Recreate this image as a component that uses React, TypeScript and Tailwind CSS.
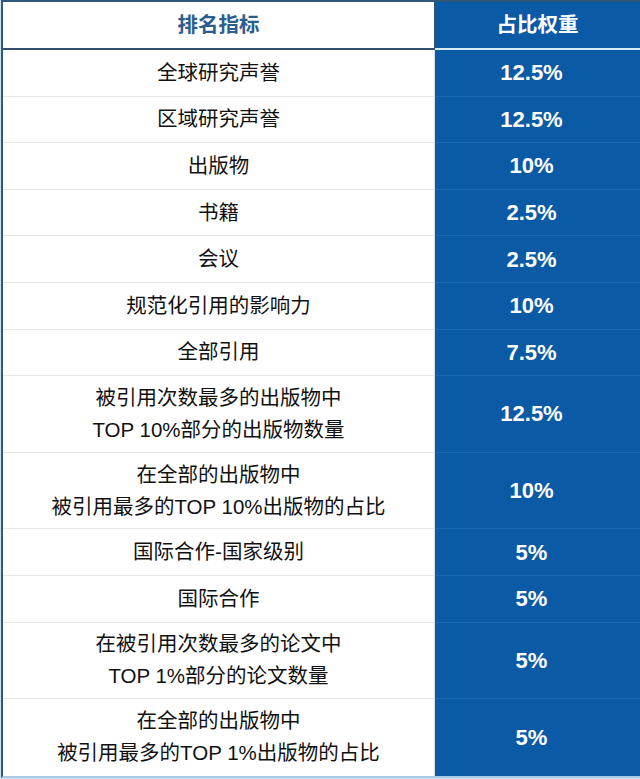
import React from "react";

type Row = { name: string[]; weight: string };

const rows: Row[] = [
  { name: ["全球研究声誉"], weight: "12.5%" },
  { name: ["区域研究声誉"], weight: "12.5%" },
  { name: ["出版物"], weight: "10%" },
  { name: ["书籍"], weight: "2.5%" },
  { name: ["会议"], weight: "2.5%" },
  { name: ["规范化引用的影响力"], weight: "10%" },
  { name: ["全部引用"], weight: "7.5%" },
  { name: ["被引用次数最多的出版物中", "TOP 10%部分的出版物数量"], weight: "12.5%" },
  { name: ["在全部的出版物中", "被引用最多的TOP 10%出版物的占比"], weight: "10%" },
  { name: ["国际合作-国家级别"], weight: "5%" },
  { name: ["国际合作"], weight: "5%" },
  { name: ["在被引用次数最多的论文中", "TOP 1%部分的论文数量"], weight: "5%" },
  { name: ["在全部的出版物中", "被引用最多的TOP 1%出版物的占比"], weight: "5%" },
];

function App() {
  return (
    <div className="w-[640px] h-[779px] bg-[#cfe3f3] pl-[1px] font-['Liberation_Sans','Noto_Sans_CJK_SC',sans-serif]">
      <div className="border-l-2 border-t-2 border-b-2 border-l-[#2f5878] border-t-[#2f5878] border-b-[#a9cbe6]">
        {/* header */}
        <div className="grid grid-cols-[432px_1fr] h-[48px]">
          <div className="flex items-center justify-center bg-white border-b-2 border-[#34506a] border-r border-r-[#34506a] text-[20.5px] font-bold text-[#2b5d8d]">
            排名指标
          </div>
          <div className="flex items-center justify-center bg-[#0b5aa6] border-b-2 border-[#d9ebf8] text-[20.5px] font-bold text-white">
            占比权重
          </div>
        </div>

        {rows.map((row, i) => (
          <div
            key={i}
            className={
              "grid grid-cols-[432px_1fr] " +
              (row.name.length > 1 ? "h-[76.6px]" : "h-[46.6px]")
            }
          >
            <div
              className={
                "flex flex-col items-center justify-center bg-white border-r border-r-[#d7dde3] text-[20.5px] leading-[32px] text-[#111111] " +
                (i < rows.length - 1 ? "border-b border-b-[#e6e6e6]" : "")
              }
            >
              {row.name.map((line, j) => (
                <span key={j}>{line}</span>
              ))}
            </div>
            <div
              className={
                "flex items-center justify-center bg-[#0b5aa6] text-[22px] font-bold text-white pr-[12px] " +
                (i < rows.length - 1 ? "border-b border-b-[#1c66b0]" : "")
              }
            >
              {row.weight}
            </div>
          </div>
        ))}
      </div>
    </div>
  );
}

export default App;
